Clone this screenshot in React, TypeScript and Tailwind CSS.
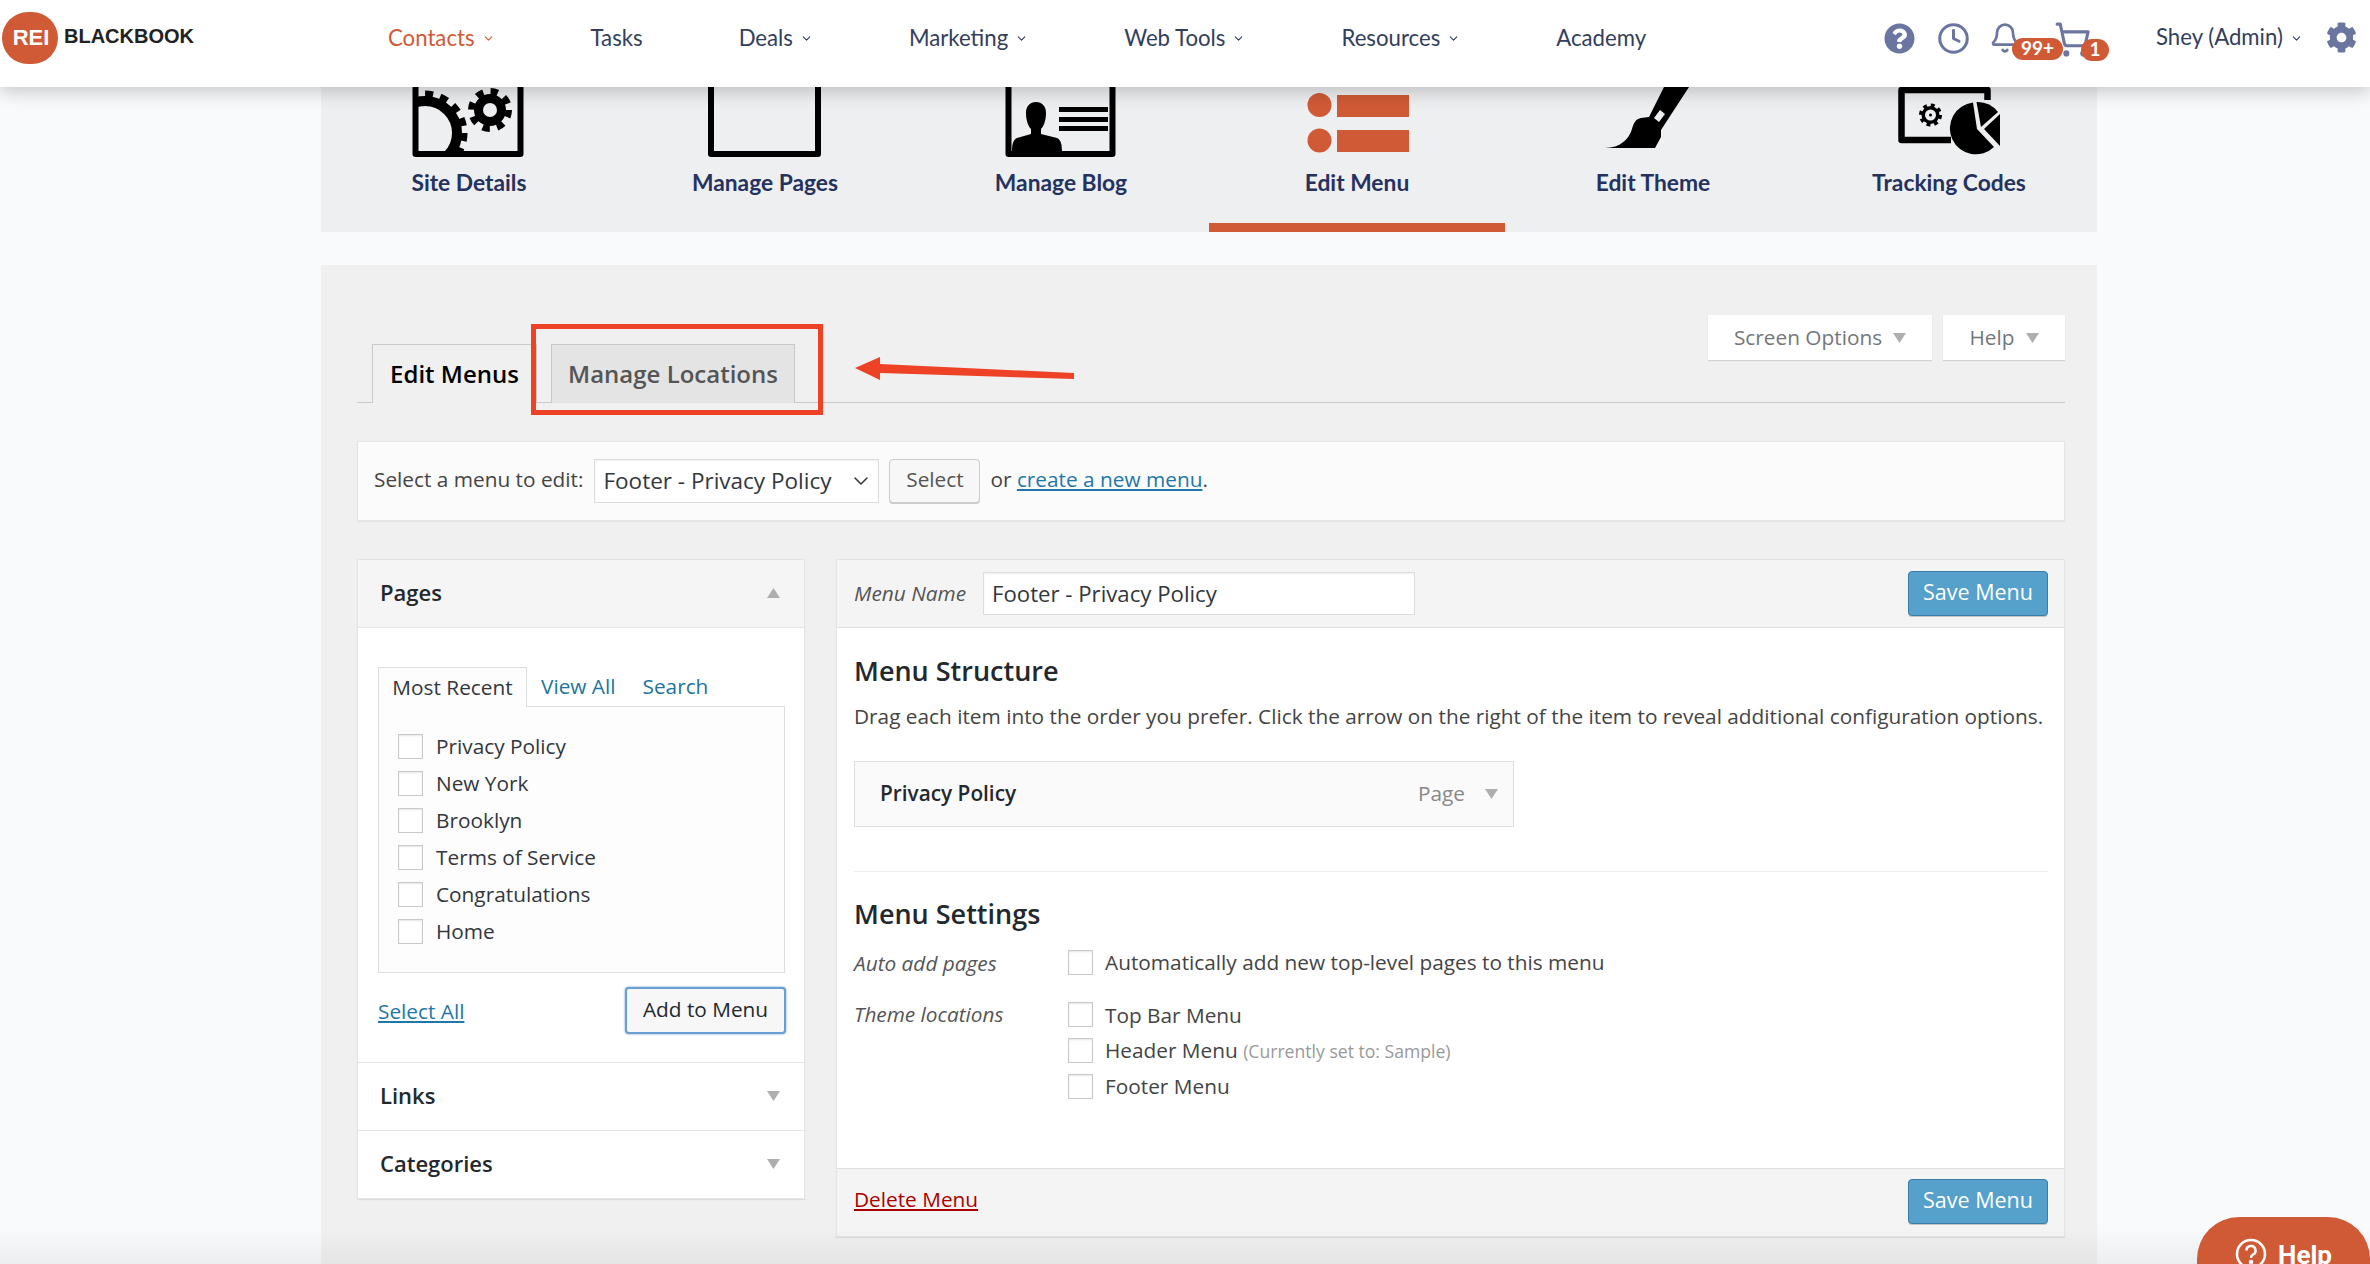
import React from 'react';
import { ChevronDown, Clock, Bell, ShoppingCart } from 'lucide-react';
import { FaQuestionCircle, FaCog } from 'react-icons/fa';

const OPEN = "font-['Open_Sans',sans-serif]";

const navItems = [
  { label: 'Contacts', chevron: true, active: true },
  { label: 'Tasks' },
  { label: 'Deals', chevron: true },
  { label: 'Marketing', chevron: true },
  { label: 'Web Tools', chevron: true },
  { label: 'Resources', chevron: true },
  { label: 'Academy' },
];

const Gear = ({ cx, cy, r, hole, tooth }: { cx: number; cy: number; r: number; hole: number; tooth: number }) => {
  const circ = 2 * Math.PI * r;
  return (
    <g>
      <circle cx={cx} cy={cy} r={r} fill="#000" />
      <circle cx={cx} cy={cy} r={r} fill="none" stroke="#000" strokeWidth={tooth} strokeDasharray={`${circ / 16} ${circ / 16}`} />
      <circle cx={cx} cy={cy} r={hole} fill="#eeeff1" />
    </g>
  );
};

const SiteIcon = () => (
  <svg viewBox="0 0 296 70" className="w-[296px] h-[70px]">
    <clipPath id="siteClip"><rect x="94" y="0" width="104" height="66" /></clipPath>
    <g clipPath="url(#siteClip)">
      <circle cx="104" cy="46" r="32" fill="none" stroke="#000" strokeWidth="10" />
      <circle cx="104" cy="46" r="39" fill="none" stroke="#000" strokeWidth="7" strokeDasharray="8 7.300" />
    </g>
    <Gear cx={169} cy={23} r={16} hole={7} tooth={12} />
    <path d="M94.500 0V67H199.500V0" fill="none" stroke="#000" strokeWidth="6" strokeLinejoin="round" />
  </svg>
);

const PagesIcon = () => (
  <svg viewBox="0 0 296 70" className="w-[296px] h-[70px]">
    <path d="M94 0V67H201V0" fill="none" stroke="#000" strokeWidth="6" strokeLinejoin="round" />
  </svg>
);

const BlogIcon = () => (
  <svg viewBox="0 0 296 70" className="w-[296px] h-[70px]">
    <path d="M95.500 0V67H199.500V0" fill="none" stroke="#000" strokeWidth="6" strokeLinejoin="round" />
    <path d="M123 15c6 0 10 4 10 11 0 7-2 13-5 16v5l16 4c4 2 5 6 5 15H99c0-9 1-13 5-15l14-4v-5c-3-3-5-9-5-16 0-7 4-11 10-11z" fill="#000" />
    <rect x="146" y="20" width="49" height="5" fill="#000" />
    <rect x="146" y="30" width="49" height="5" fill="#000" />
    <rect x="146" y="39" width="49" height="5" fill="#000" />
  </svg>
);

const MenuIcon = () => (
  <svg viewBox="0 0 296 70" className="w-[296px] h-[70px]">
    <circle cx="110.500" cy="18" r="12" fill="#d05a36" />
    <rect x="128" y="8" width="72" height="22" fill="#d05a36" />
    <circle cx="110.500" cy="53.500" r="12" fill="#d05a36" />
    <rect x="128" y="43" width="72" height="22" fill="#d05a36" />
  </svg>
);

const ThemeIcon = () => (
  <svg viewBox="0 0 296 70" className="w-[296px] h-[70px]">
    <path
      fillRule="evenodd"
      d="M159 0H184L156 43V50L150 61H100C115 61 124 52 127 42C129 35 131 32 136 31L144 30ZM155 23L160 27L154 35L149 31Z"
      fill="#000"
    />
  </svg>
);

const TrackingIcon = () => (
  <svg viewBox="0 0 296 70" className="w-[296px] h-[70px]">
    <path d="M186.500 13V3H100.500V53H150" fill="none" stroke="#000" strokeWidth="6.500" strokeLinejoin="round" />
    <Gear cx={129.500} cy={28} r={9} hole={5.500} tooth={5} />
    <circle cx="129.500" cy="28" r="1.500" fill="#000" />
    <clipPath id="pieClip"><rect x="140" y="0" width="59" height="70" /></clipPath>
    <g clipPath="url(#pieClip)">
      <path d="M172 15.500A26 26 0 1 0 193 60L176 42Z" fill="#000" />
      <path d="M175.500 15A26 26 0 0 1 197 25L180 40Z" fill="#000" />
      <path d="M183 42L199 27V59Z" fill="#000" />
    </g>
  </svg>
);

const tabs = [
  { label: 'Site Details', Icon: SiteIcon },
  { label: 'Manage Pages', Icon: PagesIcon },
  { label: 'Manage Blog', Icon: BlogIcon },
  { label: 'Edit Menu', Icon: MenuIcon, active: true },
  { label: 'Edit Theme', Icon: ThemeIcon },
  { label: 'Tracking Codes', Icon: TrackingIcon },
];

const Triangle = ({ up, className = '' }: { up?: boolean; className?: string }) => (
  <svg viewBox="0 0 13 10" className={`w-[13px] h-[10px] fill-[#aeaeae] ${className}`}>
    <path d={up ? 'M6.500 0l6.500 10H0z' : 'M0 0h13L6.500 10z'} />
  </svg>
);

const Check = () => (
  <span className="block w-[25px] h-[25px] shrink-0 bg-white border border-[#c9c9c9] shadow-[inset_0_1px_2px_rgba(0,0,0,0.1)]" />
);

const SaveButton = () => (
  <button className="w-[140px] h-[45px] pb-[2px] bg-[#55a1cb] border border-[#3a7ea6] rounded-[4px] text-white text-[21.500px] shadow-[0_1px_0_rgba(0,0,0,0.2)]">
    Save Menu
  </button>
);

const pageItems = ['Privacy Policy', 'New York', 'Brooklyn', 'Terms of Service', 'Congratulations', 'Home'];

export default function App() {
  return (
    <div className="relative w-[2370px] h-[1264px] overflow-hidden bg-[#f9fafc]">
      {/* Top nav */}
      <header className="relative z-10 h-[87px] bg-white flex items-center shadow-[0_4px_18px_rgba(0,0,0,0.22)] font-['Lato',sans-serif]">
        <div className="w-[388px] flex items-center pl-[2px] shrink-0 -mt-[12px]">
          <span className="w-[56px] h-[52px] rounded-full bg-[#d05a36] flex items-center justify-center text-white font-bold text-[22px] pl-[2px] font-['Liberation_Sans',sans-serif]">
            REI
          </span>
          <span className="ml-[6px] text-[#222] font-bold text-[20px] font-['Liberation_Sans',sans-serif] -mt-[3px]">BLACKBOOK</span>
        </div>
        <nav className="flex items-center gap-[96px] -mt-[12px]">
          {navItems.map(item => (
            <span key={item.label} className={`flex items-center text-[22.200px] ${item.active ? 'text-[#d05a36]' : 'text-[#333e5c]'}`}>
              {item.label}
              {item.chevron && <ChevronDown size={13} strokeWidth={2} className="ml-[7px] mt-[3px]" />}
            </span>
          ))}
        </nav>
        <div className="ml-auto flex items-center h-full relative -mt-[11px] w-[486px] text-[#6a76a0]">
          <FaQuestionCircle size={31} className="absolute left-0 top-[28px]" />
          <Clock size={33} strokeWidth={2.200} className="absolute left-[53px] top-[27px]" />
          <Bell size={32} strokeWidth={2} className="absolute left-[105px] top-[27px]" />
          <ShoppingCart size={37} strokeWidth={2} className="absolute left-[170px] top-[26px]" />
          <span className="absolute left-[128px] top-[43px] w-[51px] h-[22px] rounded-full bg-[#d05a36] text-white text-[19px] font-bold flex items-center justify-center">99+</span>
          <span className="absolute left-[197px] top-[44px] w-[28px] h-[22px] rounded-full bg-[#d05a36] text-white text-[19px] font-bold flex items-center justify-center">1</span>
          <span className="absolute left-[272px] top-[-1px] h-full flex items-center text-[22.200px] text-[#333e5c]">
            Shey (Admin)
            <ChevronDown size={13} strokeWidth={2} className="ml-[7px] mt-[3px]" />
          </span>
          <FaCog size={31} className="absolute left-[442px] top-[27px]" />
        </div>
      </header>

      {/* Site tabs */}
      <section className="ml-[321px] w-[1776px] h-[145px] bg-[#eeeff1] flex font-['Lato',sans-serif]">
        {tabs.map(({ label, Icon, active }) => (
          <div key={label} className={`w-[296px] flex flex-col items-center ${active ? 'border-b-[9px] border-[#d05a36]' : ''}`}>
            <Icon />
            <span className="mt-[12px] text-[22.800px] font-bold leading-[26px] text-[#25325e]">{label}</span>
          </div>
        ))}
      </section>

      {/* WP admin panel */}
      <main className={`relative mt-[33px] ml-[321px] w-[1776px] h-[1000px] bg-[#f0f0f1] pl-[36px] pr-[32px] ${OPEN} text-[20.800px] text-[#444]`}>
        <div className="h-[138px] flex justify-between items-start border-b border-[#c9c9c9]">
          <div className="self-end flex pl-[15px] gap-[14px] -mb-px">
            <span className="h-[59px] w-[165px] border border-b-0 border-[#c9c9c9] bg-[#f0f0f1] flex items-center justify-center text-[24px] font-semibold text-black">Edit Menus</span>
            <span className="h-[59px] w-[244px] border border-b-0 border-[#c9c9c9] bg-[#e4e4e4] flex items-center justify-center text-[24px] font-semibold text-[#555]">Manage Locations</span>
          </div>
          <div className="flex gap-[11px] mt-[50px]">
            <span className="h-[45px] w-[224px] bg-white shadow-[0_1px_1px_rgba(0,0,0,0.12)] flex items-center justify-center gap-[11px] text-[#72777c]">
              Screen Options <Triangle />
            </span>
            <span className="h-[45px] w-[122px] bg-white shadow-[0_1px_1px_rgba(0,0,0,0.12)] flex items-center justify-center gap-[11px] text-[#72777c]">
              Help <Triangle />
            </span>
          </div>
        </div>

        <div className="mt-[38px] h-[80px] bg-[#fbfbfb] border border-[#e5e5e5] shadow-[0_1px_1px_rgba(0,0,0,0.05)] flex items-center pl-[16px]">
          <span className="mb-[2px]">Select a menu to edit:</span>
          <span className="relative ml-[11px]">
            <select className="appearance-none block w-[285px] h-[44px] pl-[8px] bg-white border border-[#ddd] text-[22.500px] text-[#32373c] shadow-[inset_0_1px_2px_rgba(0,0,0,0.07)]">
              <option>Footer - Privacy Policy</option>
            </select>
            <ChevronDown size={24} strokeWidth={1.500} className="absolute right-[6px] top-[10px] text-[#333]" />
          </span>
          <button className="ml-[10px] w-[91px] h-[44px] pb-[2px] bg-[#f7f7f7] border border-[#ccc] rounded-[4px] text-[#555] shadow-[0_1px_0_#ccc]">Select</button>
          <span className="ml-[10px] mb-[2px]">or <a className="text-[#1f77a8] underline">create a new menu</a>.</span>
        </div>

        <div className="mt-[38px] flex gap-[31px] items-start">
          {/* Left accordion */}
          <aside className="w-[448px] shrink-0 bg-white border border-[#e5e5e5] shadow-[0_1px_1px_rgba(0,0,0,0.08)] text-[#32373c]">
            <div className="h-[68px] pb-[2px] bg-[#f5f5f5] border-b border-[#e5e5e5] flex items-center justify-between pl-[22px] pr-[24px]">
              <span className="text-[22px] font-semibold text-[#23282d]">Pages</span>
              <Triangle up />
            </div>
            <div className="h-[435px] border-b border-[#e5e5e5] pt-[39px] px-[20px]">
              <div className="flex h-[40px] items-center">
                <span className="h-[40px] w-[149px] border border-b-0 border-[#ddd] bg-[#fdfdfd] relative z-[1] flex items-center justify-center">Most Recent</span>
                <a className="ml-[14px] text-[#21759b]">View All</a>
                <a className="ml-[27px] text-[#21759b]">Search</a>
              </div>
              <div className="-mt-px h-[267px] w-[407px] border border-[#ddd] bg-[#fdfdfd] pt-[27px] pl-[19px] flex flex-col gap-[12px]">
                {pageItems.map(p => (
                  <label key={p} className="flex items-center gap-[13px] h-[25px]">
                    <Check />
                    <span>{p}</span>
                  </label>
                ))}
              </div>
              <div className="mt-[14px] w-[408px] flex items-center justify-between">
                <a className="text-[#1f77a8] underline mt-[3px]">Select All</a>
                <button className="w-[161px] h-[47px] pb-[2px] bg-[#f7f7f7] rounded-[4px] border-2 border-[#6a9fd4] shadow-[0_0_2px_rgba(30,110,190,0.8)] text-[#23282d]">Add to Menu</button>
              </div>
            </div>
            <div className="h-[68px] pb-[2px] border-b border-[#e5e5e5] flex items-center justify-between pl-[22px] pr-[24px]">
              <span className="text-[22px] font-semibold text-[#23282d]">Links</span>
              <Triangle />
            </div>
            <div className="h-[67px] pb-[2px] flex items-center justify-between pl-[22px] pr-[24px]">
              <span className="text-[22px] font-semibold text-[#23282d]">Categories</span>
              <Triangle />
            </div>
          </aside>

          {/* Menu editor */}
          <section className="flex-1 bg-white border border-[#e5e5e5] shadow-[0_1px_1px_rgba(0,0,0,0.08)]">
            <div className="h-[68px] bg-[#f4f4f4] border-b border-[#dfdfdf] flex items-center pl-[17px] pr-[16px]">
              <em className="w-[129px] text-[#555]">Menu Name</em>
              <input defaultValue="Footer - Privacy Policy" className="w-[432px] h-[43px] px-[8px] bg-white border border-[#ddd] text-[22.200px] text-[#32373c] shadow-[inset_0_1px_2px_rgba(0,0,0,0.07)]" />
              <span className="ml-auto"><SaveButton /></span>
            </div>
            <div className="h-[540px] pl-[17px] pr-[16px] pt-[25px]">
              <h3 className="text-[27px] leading-[36px] font-semibold text-[#23282d]">Menu Structure</h3>
              <p className="mt-[14px] leading-[27px] text-[#444]">Drag each item into the order you prefer. Click the arrow on the right of the item to reveal additional configuration options.</p>
              <div className="mt-[31px] h-[66px] w-[660px] bg-[#fafafa] border border-[#dfdfdf] flex items-center pl-[25px] pr-[15px]">
                <span className="font-semibold text-[#23282d]">Privacy Policy</span>
                <span className="ml-auto text-[#888]">Page</span>
                <Triangle className="ml-[20px]" />
              </div>
              <div className="mt-[44px] border-t border-[#eee]" />
              <h3 className="mt-[24px] text-[27px] leading-[36px] font-semibold text-[#23282d]">Menu Settings</h3>
              <div className="mt-[18px] flex">
                <em className="w-[214px] text-[#555] leading-[26px]">Auto add pages</em>
                <label className="flex items-center gap-[12px] h-[25px]"><Check /><span>Automatically add new top-level pages to this menu</span></label>
              </div>
              <div className="mt-[26px] flex">
                <em className="w-[214px] text-[#555] leading-[24px]">Theme locations</em>
                <div className="flex flex-col gap-[11px]">
                  <label className="flex items-center gap-[12px] h-[25px]"><Check /><span className="mt-[2px]">Top Bar Menu</span></label>
                  <label className="flex items-center gap-[12px] h-[25px]"><Check /><span>Header Menu <span className="text-[17.600px] text-[#999]">(Currently set to: Sample)</span></span></label>
                  <label className="flex items-center gap-[12px] h-[25px]"><Check /><span>Footer Menu</span></label>
                </div>
              </div>
            </div>
            <div className="h-[68px] bg-[#f4f4f4] border-t border-[#dfdfdf] flex items-center justify-between pl-[17px] pr-[16px]">
              <a className="text-[#a00] underline mb-[6px]">Delete Menu</a>
              <span className="-mt-[2px]"><SaveButton /></span>
            </div>
          </section>
        </div>

        {/* Annotation */}
        <div className="absolute left-[210px] top-[59px] w-[292px] h-[91px] border-[5px] border-[#ee4226]" />
        <svg className="absolute left-[530px] top-[88px] w-[225px] h-[30px]" viewBox="0 0 225 30">
          <path d="M4 15L29 4v7l194 9v6L29 20v7z" fill="#ee4226" />
        </svg>
      </main>

      {/* Chat help button */}
      <div className="absolute left-[2197px] top-[1217px] w-[173px] h-[60px] bg-[#d05a36] rounded-tl-[42px] rounded-tr-[42px] flex items-start justify-center gap-[11px] pt-[16px] text-white font-bold text-[26px] leading-[44px] font-['Roboto',sans-serif] z-20">
        <svg viewBox="0 0 32 32" className="w-[32px] h-[32px] mt-[5px]" fill="none" stroke="#fff" strokeWidth="2.500">
          <circle cx="16" cy="16" r="14" />
          <path d="M11.500 12.500a4.500 4.500 0 1 1 6.500 4c-1.500.8-2 1.700-2 3.500" />
          <circle cx="16" cy="24" r="1" fill="#fff" />
        </svg>
        Help
      </div>
      <div className="absolute left-0 right-0 bottom-0 h-[36px] bg-gradient-to-b from-transparent to-black/5 pointer-events-none" />
    </div>
  );
}
